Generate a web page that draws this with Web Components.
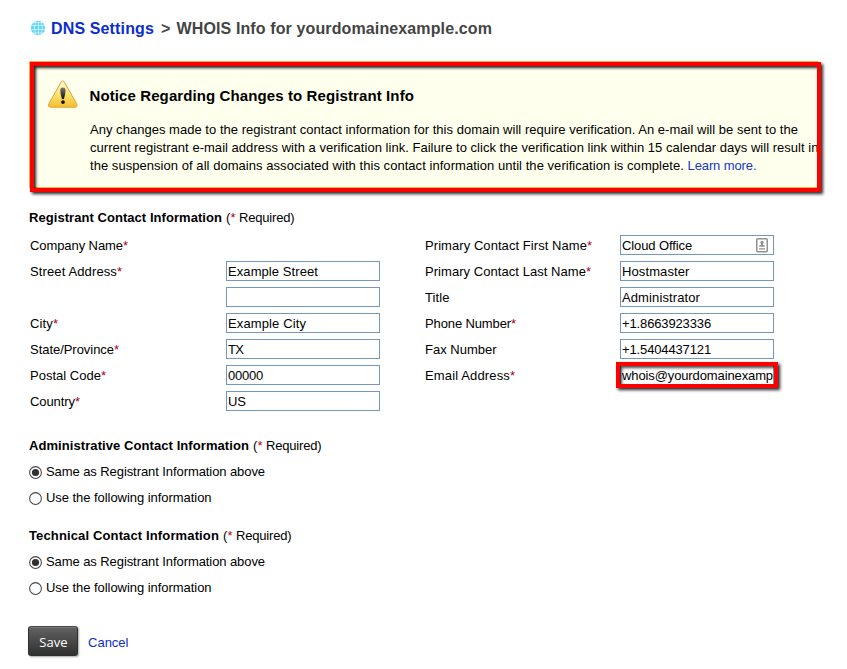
<!DOCTYPE html>
<html lang="en">
<head>
<meta charset="utf-8">
<title>DNS Settings</title>
<style>
html,body{margin:0;padding:0;background:#fff}
body{font:13px/18px "Liberation Sans",Arial,sans-serif;color:#000;width:847px;height:669px;overflow:hidden}
</style>
</head>
<body>
<whois-page></whois-page>
<script>
const define = (name, html, setup) => {
  const tpl = document.createElement('template');
  tpl.innerHTML = html;
  customElements.define(name, class extends HTMLElement {
    connectedCallback() {
      if (this.shadowRoot) return;
      const root = this.attachShadow({ mode: 'open' });
      const copy = tpl.content.cloneNode(true);
      if (setup) setup(this, copy);
      root.appendChild(copy);
    }
  });
};

/* A run of text spaced evenly over a given advance width. */
customElements.define('fit-text', class extends HTMLElement {
  connectedCallback() {
    if (this.shadowRoot) return;
    const root = this.attachShadow({ mode: 'open' });
    root.innerHTML = '<style>:host{display:inline-block;white-space:pre}</style><span><slot></slot></span>';
    const w = +this.getAttribute('w');
    const natural = root.querySelector('span').getBoundingClientRect().width;
    this.style.letterSpacing = ((w - natural) / this.textContent.length).toFixed(4) + 'px';
  }
});

define('globe-icon', `<style>:host{display:block;width:16px;height:16px}svg{display:block}</style>
<svg width="16" height="16" viewBox="0 0 16 16"><circle cx="8" cy="8" r="7.2" fill="#62d4f8"/>
<g fill="none" stroke="#d4f5ff" stroke-width=".8"><path d="M1 5.5h14M1 9.5h14M2.5 12.9h11M3 2.5h10M8.5 1v14"/><path d="M5.5 1.4Q3.4 8 5.5 14.6M11.2 1.6Q13.5 8 11.2 14.4"/></g></svg>`);

define('warning-icon', `<style>:host{display:block;width:30px;height:28px}svg{display:block}</style>
<svg width="30" height="28" viewBox="0 0 30 28"><defs><linearGradient id="g" x1="0" y1="0" x2="0" y2="1"><stop offset="0" stop-color="#fffbe0"/><stop offset=".5" stop-color="#fde473"/><stop offset="1" stop-color="#f5bd2c"/></linearGradient>
<linearGradient id="b" x1="0" y1="0" x2="0" y2="1"><stop offset="0" stop-color="#777"/><stop offset="1" stop-color="#111"/></linearGradient></defs>
<path d="M13.2 1.9Q14.7-.4 16.2 1.9L28.6 23.7Q30 27 27 27.2H2.5Q-.5 27 .9 23.7Z" fill="url(#g)" stroke="#dca436" stroke-width="1"/>
<path d="M12.2 10Q12.4 7.6 14.9 7.6T17.6 10Q17.2 15.5 15.9 19H14Q12.6 15.5 12.2 10Z" fill="url(#b)"/><circle cx="15" cy="22.1" r="1.9" fill="#111"/></svg>`);

define('page-title', `<style>
:host{display:flex;align-items:flex-start;height:20px;font-size:16px;font-weight:bold;line-height:22px;color:#444}
globe-icon{margin:2px 5px 0 1px}a{color:#0a2ecc;margin-right:7px}.gt{margin-right:6.5px;width:9px}
</style><globe-icon></globe-icon><a><fit-text w="103">DNS Settings</fit-text></a><span class="gt">&gt;</span><fit-text w="315.5">WHOIS Info for yourdomainexample.com</fit-text>`);

define('notice-box', `<style>
:host{display:flex;box-sizing:border-box;width:789px;height:127px;background:#ffffee;border:1px solid #e9bd55;border-right:0;position:relative;padding:18px 0 0 18px}
warning-icon{flex:none;margin-right:11.5px}
.frame{position:absolute;left:0;top:0;width:783px;height:122px;border:4px solid #f00;box-shadow:2px 2px 3px rgba(0,0,0,.85),inset 2px 2px 3px rgba(0,0,0,.85);pointer-events:none}
</style><warning-icon></warning-icon><slot></slot><div class="frame"></div>`);

define('notice-text', `<style>
:host{display:block;padding-top:7px}
h2{margin:0 0 16px;font-size:15px;line-height:18px}
p{margin:0 0 0 .5px;line-height:18px;white-space:nowrap}p fit-text{display:block}.l{display:flex}a{color:#1437c8}
</style><h2><fit-text w="324.5">Notice Regarding Changes to Registrant Info</fit-text></h2>
<p><fit-text w="708">Any changes made to the registrant contact information for this domain will require verification. An e-mail will be sent to the</fit-text></p>
<p><fit-text w="728.5">current registrant e-mail address with a verification link. Failure to click the verification link within 15 calendar days will result in</fit-text></p>
<p class="l"><fit-text w="597.5">the suspension of all domains associated with this contact information until the verification is complete. </fit-text><a><fit-text w="69">Learn more.</fit-text></a></p>`);

define('section-title', `<style>
:host{display:flex;height:18px;line-height:18px}b{margin-right:4px}i{font-style:normal;color:#b3000f}
</style><b></b><span class="r"><fit-text w="4.5">(</fit-text><i><fit-text w="5">*</fit-text></i><fit-text w="59"> Required)</fit-text></span>`,
(host, c) => { c.querySelector('b').innerHTML = `<fit-text w="${host.getAttribute('w')}">${host.getAttribute('text')}</fit-text>`; });

define('form-row', `<style>
:host{display:grid;grid-template-columns:var(--label,196px) 154px;height:26px;align-items:start;line-height:18px}
.label{padding-top:4px}
i{font-style:normal;color:#b3000f}
.box{box-sizing:border-box;width:154px;height:20px;margin-top:2px;border:1px solid #7298bf;padding:2px 0 0 1px;position:relative;background:#fff}
.clip{width:151px;height:17px;line-height:16px;white-space:nowrap}
svg{position:absolute;right:5px;top:2px}
.mark{position:absolute;left:-5px;top:-4px;width:154px;height:18px;border:4px solid #f00;box-shadow:2px 2px 3px rgba(0,0,0,.85),inset 2px 2px 3px rgba(0,0,0,.7)}
</style><span class="label"></span><div class="box"><div class="clip"></div></div>`,
(host, c) => {
  const a = n => host.getAttribute(n);
  const label = c.querySelector('.label'), box = c.querySelector('.box');
  if (a('label')) label.innerHTML = `<fit-text w="${a('lw')}">${a('label')}</fit-text>` + (host.hasAttribute('req') ? '<i>*</i>' : '');
  if (host.hasAttribute('nobox')) return box.remove();
  if (a('value')) c.querySelector('.clip').innerHTML = `<fit-text w="${a('vw')}">${a('value')}</fit-text>`;
  if (host.hasAttribute('card')) box.insertAdjacentHTML('beforeend', '<svg width="12" height="15" viewBox="0 0 12 15"><rect x=".75" y=".75" width="10.5" height="13" rx="1" fill="#fff" stroke="#929292" stroke-width="1.5"/><path d="M6 2.8a1.6 1.6 0 0 1 1 2.9v1.1l1.8.7v1.3H3.2V7.5l1.8-.7V5.7a1.6 1.6 0 0 1 1-2.9ZM3 10.3h6v1.2H3Z" fill="#929292"/></svg>');
  if (host.hasAttribute('marked')) box.insertAdjacentHTML('beforeend', '<div class="mark"></div>');
});

define('radio-row', `<style>
:host{display:flex;align-items:center;height:26px;line-height:18px}
svg{margin:0 4px 0 0;flex:none}:host(:not([on])) .dot{display:none}
</style><svg width="13" height="13" viewBox="0 0 13 13"><circle cx="6.5" cy="6.5" r="5.9" fill="#fff" stroke="#444" stroke-width="1.05"/><circle class="dot" cx="6.5" cy="6.5" r="3.6" fill="#303030"/></svg><span></span>`,
(host, c) => { c.querySelector('span').innerHTML = `<fit-text w="${host.getAttribute('w')}">${host.getAttribute('text')}</fit-text>`; });

define('form-actions', `<style>
:host{display:flex;align-items:center;height:30px}
.save{box-sizing:border-box;width:50px;height:30px;border:1px solid #303030;border-top-color:#484848;border-radius:3px;background:linear-gradient(#626262,#303030);box-shadow:1px 1px 2px rgba(0,0,0,.35),inset 0 1px 0 #777;color:#fff;font:13px/31px "Open Sans","Noto Sans",sans-serif;text-align:center;padding-left:1px;margin-right:10px}
a{color:#0a2ecc;padding-top:3px}
</style><div class="save"><fit-text w="28.5">Save</fit-text></div><a><fit-text w="40.5">Cancel</fit-text></a>`);

define('whois-page', `<style>
:host{display:flex;flex-direction:column;padding:18px 0 0 29px}
notice-box{margin:23px 0 21px}
.cols{display:grid;grid-template-columns:395px 350px;margin:6px 0 22px 1px}
.right{--label:195px}
.radios{margin:4px 0 16px}form-actions{margin:9px 0 0 -1px}
</style>
<page-title></page-title>
<notice-box><notice-text></notice-text></notice-box>
<section-title w="193" text="Registrant Contact Information"></section-title>
<div class="cols"><div>
<form-row label="Company Name" lw="93" req nobox></form-row>
<form-row label="Street Address" lw="87" req value="Example Street" vw="90"></form-row>
<form-row></form-row>
<form-row label="City" lw="23" req value="Example City" vw="78"></form-row>
<form-row label="State/Province" lw="84" req value="TX" vw="15"></form-row>
<form-row label="Postal Code" lw="71" req value="00000" vw="35"></form-row>
<form-row label="Country" lw="45" req value="US" vw="18"></form-row>
</div><div class="right">
<form-row label="Primary Contact First Name" lw="162" req value="Cloud Office" vw="70" card></form-row>
<form-row label="Primary Contact Last Name" lw="161" req value="Hostmaster" vw="67.5"></form-row>
<form-row label="Title" lw="24.5" value="Administrator" vw="78"></form-row>
<form-row label="Phone Number" lw="86" req value="+1.8663923336" vw="89"></form-row>
<form-row label="Fax Number" lw="71.5" value="+1.5404437121" vw="89"></form-row>
<form-row label="Email Address" lw="85" req value="whois@yourdomainexamp" vw="151" marked></form-row>
</div></div>
<section-title w="220" text="Administrative Contact Information"></section-title>
<div class="radios"><radio-row on w="219" text="Same as Registrant Information above"></radio-row><radio-row w="165.5" text="Use the following information"></radio-row></div>
<section-title w="190" text="Technical Contact Information"></section-title>
<div class="radios"><radio-row on w="219" text="Same as Registrant Information above"></radio-row><radio-row w="165.5" text="Use the following information"></radio-row></div>
<form-actions></form-actions>`);
</script>
</body>
</html>
